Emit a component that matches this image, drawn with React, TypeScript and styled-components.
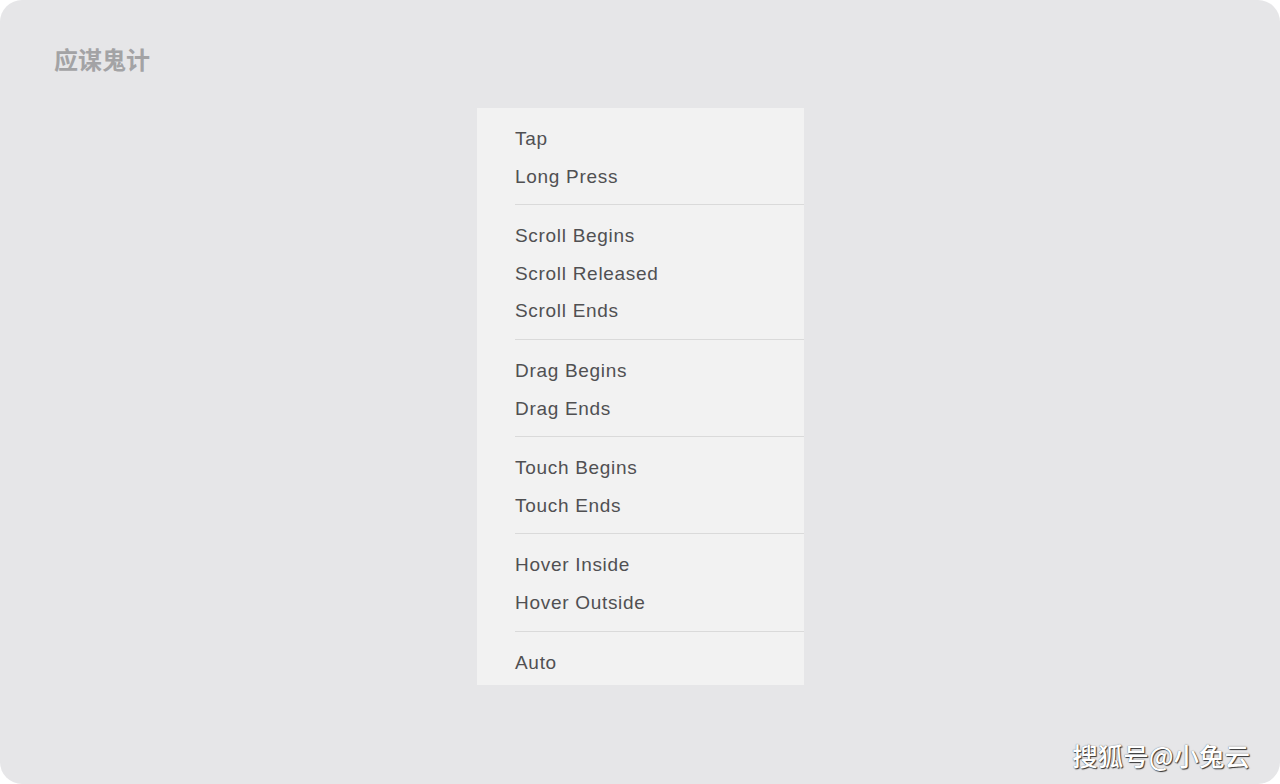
import React from "react";
import styled, { createGlobalStyle } from "styled-components";

const Global = createGlobalStyle`
  html, body { margin: 0; padding: 0; background: #ffffff; }
  #root { width: 1280px; height: 784px; }
`;

const Frame = styled.div`
  position: relative;
  width: 1280px;
  height: 784px;
  box-sizing: border-box;
  background: #e6e6e8;
  border-radius: 22px;
  overflow: hidden;
  display: flex;
  flex-direction: column;
  align-items: center;
`;

const Title = styled.div`
  align-self: flex-start;
  margin: 43px 0 0 54px;
  height: 32px;
  line-height: 32px;
  font-family: "Noto Sans CJK SC", sans-serif;
  font-weight: 700;
  font-size: 24px;
  color: #a3a3a5;
`;

const Menu = styled.div`
  margin: 33px 0 0 1px;
  width: 327px;
  background: #f2f2f2;
  padding-bottom: 4px;
`;

const Group = styled.div`
  padding: 12px 0 9px 38px;
  & + & {
    border-top: 1px solid #dadada;
    margin-left: 38px;
    padding-left: 0;
  }
  &:last-child {
    padding-bottom: 0;
  }
`;

const Item = styled.div`
  height: 37.6px;
  line-height: 37.6px;
  font-family: "Liberation Sans", Arial, sans-serif;
  font-size: 19px;
  letter-spacing: 0.7px;
  color: #505052;
`;

const Watermark = styled.div`
  position: absolute;
  right: 30px;
  bottom: 11px;
  font-family: "Noto Sans CJK SC", sans-serif;
  font-size: 25.5px;
  font-weight: 500;
  color: #ffffff;
  text-shadow: 1px 1px 1px #333, 0 0 1px #555;
`;

const groups = [
  ["Tap", "Long Press"],
  ["Scroll Begins", "Scroll Released", "Scroll Ends"],
  ["Drag Begins", "Drag Ends"],
  ["Touch Begins", "Touch Ends"],
  ["Hover Inside", "Hover Outside"],
  ["Auto"],
];

export default function App() {
  return (
    <>
      <Global />
      <Frame>
        <Title>应谋鬼计</Title>
        <Menu>
          {groups.map((g, i) => (
            <Group key={i}>
              {g.map((t) => (
                <Item key={t}>{t}</Item>
              ))}
            </Group>
          ))}
        </Menu>
        <Watermark>搜狐号@小兔云</Watermark>
      </Frame>
    </>
  );
}
